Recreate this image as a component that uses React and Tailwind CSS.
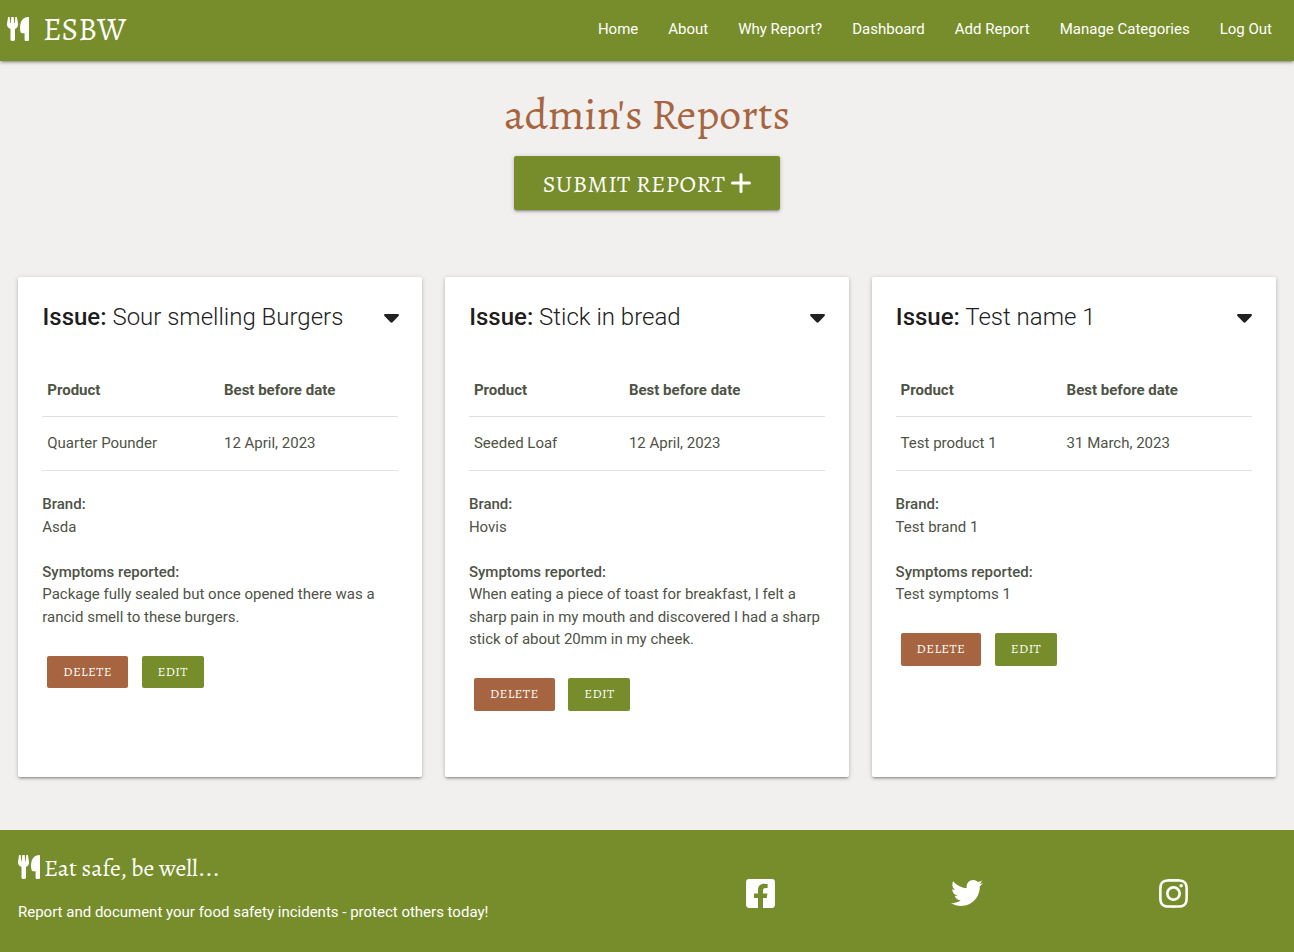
import { FaFacebookSquare, FaTwitter, FaInstagram } from "react-icons/fa";

const SERIF = "font-['Alegreya','Liberation_Serif',serif]";
const SHADOW =
  "shadow-[0_2px_2px_0_rgba(0,0,0,0.14),0_3px_1px_-2px_rgba(0,0,0,0.12),0_1px_5px_0_rgba(0,0,0,0.2)]";

const LINKS = ["Home", "About", "Why Report?", "Dashboard", "Add Report", "Manage Categories", "Log Out"];

const REPORTS = [
  {
    issue: "Sour smelling Burgers",
    product: "Quarter Pounder",
    date: "12 April, 2023",
    brand: "Asda",
    symptoms: "Package fully sealed but once opened there was a rancid smell to these burgers.",
    firstColumn: "w-[176.7px]",
  },
  {
    issue: "Stick in bread",
    product: "Seeded Loaf",
    date: "12 April, 2023",
    brand: "Hovis",
    symptoms:
      "When eating a piece of toast for breakfast, I felt a sharp pain in my mouth and discovered I had a sharp stick of about 20mm in my cheek.",
    firstColumn: "w-[155px]",
  },
  {
    issue: "Test name 1",
    product: "Test product 1",
    date: "31 March, 2023",
    brand: "Test brand 1",
    symptoms: "Test symptoms 1",
    firstColumn: "w-[166px]",
  },
];

function CutleryIcon() {
  return (
    <svg viewBox="0 0 22 24" className="h-6 w-[22px] shrink-0" fill="currentColor" aria-hidden="true">
      <path d="M1.100 0h1.600l.5 6.300h.5L4.300 0h2.400l.6 6.300h.5L8.300 0h1.600l1.100 6.800c.3 2.700-.9 4.400-3 5.200V22.600c0 .8-.6 1.400-1.400 1.400H4.900c-.8 0-1.400-.6-1.400-1.400V12C1.200 11.200-.3 9.500 0 6.800z" />
      <path d="M21 0c.6 0 1 .4 1 1v21.700c0 .7-.6 1.300-1.300 1.300h-1.800c-.7 0-1.300-.6-1.300-1.300V16.300h-2.400c-.8 0-1.300-.4-1.600-1.100C11.800 8.500 14 0 21 0z" />
    </svg>
  );
}

function ReportCard({ report }) {
  return (
    <article className={`h-[500px] w-[404.17px] rounded-[2px] bg-white p-6 text-[#4e5346] ${SHADOW}`}>
      <h2 className="flex h-8 items-center justify-between text-[24px] leading-8 font-light text-[#212121]">
        <span className="pl-[0.25px]">
          <strong className="font-medium text-black/90">Issue:</strong> {report.issue}
        </span>
        <svg viewBox="0 0 16 10" className="mt-[3px] -mr-[0.3px] h-[9.4px] w-[15px]" fill="currentColor" aria-hidden="true">
          <path d="M1.300 0h13.400c1.100 0 1.600 1.300.8 2.100L9.100 8.900c-.6.6-1.600.6-2.200 0L.5 2.100C-.3 1.300.2 0 1.300 0z" />
        </svg>
      </h2>
      <table className="mt-[30.5px] w-full border-collapse text-left leading-[22.5px]">
        <thead>
          <tr className="border-b border-black/12">
            <th className={`px-[5px] py-[15px] font-bold ${report.firstColumn}`}>Product</th>
            <th className="px-[5px] py-[15px] font-bold">Best before date</th>
          </tr>
        </thead>
        <tbody>
          <tr className="border-b border-black/12">
            <td className="px-[5px] py-[15px]">{report.product}</td>
            <td className="px-[5px] py-[15px]">{report.date}</td>
          </tr>
        </tbody>
      </table>
      <div className="mt-[22.5px] leading-[22.5px]">
        <h3 className="font-medium">Brand:</h3>
        <p>{report.brand}</p>
        <h3 className="mt-[22.5px] font-medium">Symptoms reported:</h3>
        <p>{report.symptoms}</p>
      </div>
      <div className={`mt-[27.7px] ml-[5px] flex gap-[13.7px] text-[13px] leading-[32.4px] tracking-[0.5px] text-white ${SERIF}`}>
        <button className="h-[32.4px] w-[80.7px] rounded-[2px] bg-[#a66540]">DELETE</button>
        <button className="h-[32.4px] w-[62.2px] rounded-[2px] bg-[#778d2b]">EDIT</button>
      </div>
    </article>
  );
}

export default function App() {
  return (
    <div className="flex h-[952px] w-[1294px] flex-col overflow-hidden bg-[#f1f0ee] font-['Roboto',sans-serif] text-[15px]">
      <nav className={`flex h-[61px] shrink-0 items-center justify-between bg-[#778d2b] pr-[22px] pl-[7px] text-white ${SHADOW}`}>
        <div className="flex h-[58px] items-center gap-[14px] self-start">
          <CutleryIcon />
          <span className={`pt-px text-[31.5px] leading-10 ${SERIF}`}>ESBW</span>
        </div>
        <ul className="flex gap-[30px] pb-[3px]">
          {LINKS.map((link) => (
            <li key={link}>{link}</li>
          ))}
        </ul>
      </nav>
      <main className="flex grow flex-col items-center">
        <h1 className={`mt-7 text-[43.8px] leading-[50px] text-[#a66540] ${SERIF}`}>admin's Reports</h1>
        <button
          className={`mt-[17px] flex h-[54px] w-[266px] items-center justify-center rounded-[2px] bg-[#778d2b] text-[24px] leading-[54px] tracking-[0.5px] text-white ${SERIF} ${SHADOW}`}
        >
          <span className="pt-[2px]">SUBMIT REPORT</span>
          <svg viewBox="0 0 20 20" className="mr-[0.5px] ml-[5.500px] size-5" fill="none" stroke="currentColor" strokeWidth="3" strokeLinecap="round" aria-hidden="true">
            <path d="M10 1.500v17M1.500 10h17" />
          </svg>
        </button>
        <div className="mt-[67px] flex gap-[22.5px]">
          {REPORTS.map((report) => (
            <ReportCard key={report.issue} report={report} />
          ))}
        </div>
      </main>
      <footer className="flex h-[122px] shrink-0 bg-[#778d2b] text-white">
        <div className="w-[728px] pt-[22px] pl-[18px]">
          <h2 className="flex h-[30px] items-center gap-1">
            <CutleryIcon />
            <span className={`pt-px text-[24px] leading-[30px] ${SERIF}`}>Eat safe, be well...</span>
          </h2>
          <p className="mt-[19px] leading-[22.5px]">Report and document your food safety incidents - protect others today!</p>
        </div>
        <div className="flex h-[126px] w-[462px] items-center justify-between pl-4">
          <FaFacebookSquare className="size-[33px]" />
          <FaTwitter className="size-8" />
          <FaInstagram className="size-[33px]" />
        </div>
      </footer>
    </div>
  );
}
